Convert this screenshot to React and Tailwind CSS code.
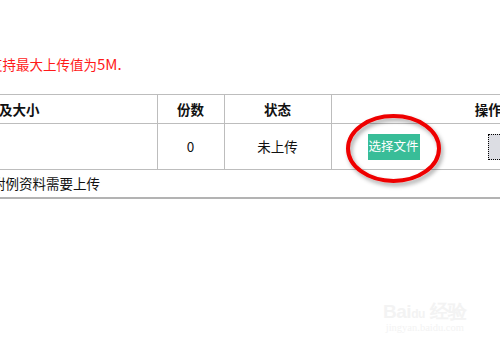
import React from "react";

export default function App() {
  const font = { fontFamily: '"Microsoft YaHei", "Noto Sans CJK SC", "Noto Sans", sans-serif' };
  return (
    <div className="relative w-[500px] h-[350px] overflow-hidden bg-white" style={font}>
      <div className="ml-[-100px] w-[745px] pt-[54px]">
        <div className="h-[20px] pl-[89px] text-[13.5px] leading-[20px] text-[#ff1a1a]">
          支持最大上传值为<span className="text-[15px]">5M.</span>
        </div>
        <div className="h-[20px]" />
        <table className="w-[745px] table-fixed border-collapse text-[13.5px] text-[#111]">
          <colgroup>
            <col className="w-[257px]" />
            <col className="w-[67px]" />
            <col className="w-[107px]" />
            <col className="w-[314px]" />
          </colgroup>
          <thead>
            <tr className="h-[29px] border-t border-b border-[#bdbdbd]">
              <th className="pl-[45px] text-left font-bold">文件名称及大小</th>
              <th className="border-l border-[#bdbdbd] text-center font-bold">份数</th>
              <th className="border-l border-[#bdbdbd] text-center font-bold">状态</th>
              <th className="border-l border-[#bdbdbd] text-center font-bold">操作</th>
            </tr>
          </thead>
          <tbody>
            <tr className="h-[46px] border-b border-[#bdbdbd]">
              <td></td>
              <td className="border-l border-[#bdbdbd] text-center">0</td>
              <td className="border-l border-[#bdbdbd] text-center">未上传</td>
              <td className="border-l border-[#bdbdbd]">
                <div className="flex items-center pl-[36px] gap-[68px]">
                  <div className="flex h-[26px] w-[52px] items-center justify-center bg-[#38bd98] text-[12.5px] text-white">
                    选择文件
                  </div>
                  <div className="flex h-[26px] w-[50px] items-center justify-center border border-dotted border-black bg-[#dcdde3] text-[12.5px] text-white">
                    上传
                  </div>
                </div>
              </td>
            </tr>
            <tr className="h-[28px] border-b-2 border-[#b3b3b3]">
              <td colSpan={4} className="pl-[92px] text-left align-middle">
                附例资料需要上传
              </td>
            </tr>
          </tbody>
        </table>
      </div>
      <svg className="absolute left-0 top-0" width="500" height="350" viewBox="0 0 500 350">
        <defs>
          <filter id="sh" x="-20%" y="-20%" width="140%" height="140%">
            <feDropShadow dx="2" dy="3" stdDeviation="2" floodColor="#000" floodOpacity="0.35" />
          </filter>
        </defs>
        <ellipse cx="393.5" cy="148.5" rx="45.5" ry="32.5" fill="none" stroke="#ee0000" strokeWidth="4" filter="url(#sh)" />
      </svg>
      <div className="absolute left-[383px] top-[302px] flex flex-col items-center text-[#f3f3f3]">
        <div className="text-[19px] font-bold leading-none tracking-tight" style={{ fontFamily: '"Liberation Sans", sans-serif' }}>Bai<span className="text-[12px]">du</span> 经验</div>
        <div className="text-[10.5px] leading-tight" style={{ fontFamily: '"Liberation Serif", serif' }}>jingyan.baidu.com</div>
      </div>
    </div>
  );
}
